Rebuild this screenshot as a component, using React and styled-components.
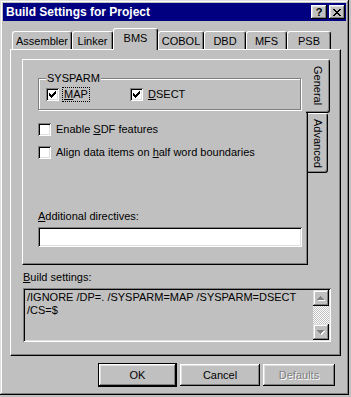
import React from 'react';
import styled, { createGlobalStyle, css } from 'styled-components';

const FACE = '#c0c0c0';
const DARK = '#808080';
const LIGHT = '#dfdfdf';

const raised = css`
  box-shadow: inset -1px -1px #000, inset 1px 1px #fff, inset -2px -2px ${DARK}, inset 2px 2px ${LIGHT};
`;
const sunken = css`
  box-shadow: inset 1px 1px ${DARK}, inset -1px -1px #fff, inset 2px 2px #000, inset -2px -2px ${LIGHT};
`;

const Global = createGlobalStyle`
  html, body { margin: 0; padding: 0; background: ${FACE}; }
  body {
    font-family: "Liberation Sans", Arial, sans-serif;
    font-size: 11px;
    color: #000;
  }
  #root { width: 351px; height: 397px; }
  u { text-underline-offset: 1px; }
`;

const Window = styled.div`
  box-sizing: border-box;
  width: 349px;
  height: 395px;
  padding: 3px;
  background: ${FACE};
  box-shadow: inset -1px -1px #000, inset 1px 1px ${LIGHT}, inset -2px -2px ${DARK}, inset 2px 2px #fff;
  display: flex;
  flex-direction: column;
`;

const TitleBar = styled.div`
  height: 18px;
  flex: none;
  background: #000080;
  color: #fff;
  display: flex;
  align-items: center;
  padding: 0 1px 0 3px;
  font-weight: bold;
  font-size: 12px;
`;

const TitleText = styled.span`
  flex: 1;
  white-space: nowrap;
`;

const CapButton = styled.div`
  box-sizing: border-box;
  width: 16px;
  height: 14px;
  background: ${FACE};
  ${raised};
  display: flex;
  align-items: center;
  justify-content: center;
  color: #000;
  font-size: 11px;
  font-weight: bold;
  line-height: 1;
  margin-left: ${p => p.$gap || 0}px;
`;

const TabStrip = styled.div`
  display: flex;
  align-items: flex-end;
  height: 21px;
  margin: 7px 0 0 9px;
  flex: none;
`;

const Tab = styled.div`
  box-sizing: border-box;
  width: ${p => p.$w}px;
  height: ${p => (p.$active ? 22 : 18)}px;
  margin-bottom: ${p => (p.$active ? -1 : 0)}px;
  padding-bottom: ${p => (p.$active ? 3 : 0)}px;
  border-top: 1px solid #fff;
  border-left: 1px solid #fff;
  border-right: 1px solid #000;
  border-radius: 3px 3px 0 0;
  box-shadow: inset -1px 0 ${DARK};
  background: ${FACE};
  display: flex;
  align-items: center;
  justify-content: center;
  position: relative;
  z-index: ${p => (p.$active ? 2 : 0)};
  white-space: nowrap;
`;

const Panel = styled.div`
  box-sizing: border-box;
  width: 331px;
  height: 307px;
  margin-left: 7px;
  flex: none;
  border: 1px solid;
  border-color: #fff #000 #000 #fff;
  box-shadow: inset -1px -1px ${DARK};
  padding: 9px 9px 0 11px;
  display: flex;
  flex-direction: column;
  position: relative;
  z-index: 1;
`;

const PageRow = styled.div`
  display: flex;
  height: 206px;
  flex: none;
`;

const InnerPage = styled.div`
  box-sizing: border-box;
  width: 286px;
  height: 206px;
  flex: none;
  border: 1px solid;
  border-color: #fff #000 #000 #fff;
  box-shadow: inset -1px -1px ${DARK};
  padding-left: 15px;
  display: flex;
  flex-direction: column;
  align-items: flex-start;
`;

const SideTabs = styled.div`
  display: flex;
  flex-direction: column;
  align-items: flex-start;
  margin-left: -2px;
`;

const SideTab = styled.div`
  box-sizing: border-box;
  width: ${p => (p.$active ? 24 : 20)}px;
  height: ${p => (p.$active ? 54 : 60)}px;
  margin-left: ${p => (p.$active ? 0 : 2)}px;
  border-top: 1px solid #fff;
  border-right: 1px solid #000;
  border-bottom: 1px solid #000;
  border-radius: 0 3px 3px 0;
  box-shadow: inset -1px -1px ${DARK};
  background: ${FACE};
  display: flex;
  align-items: center;
  justify-content: center;
  position: relative;
  z-index: ${p => (p.$active ? 2 : 0)};
`;

const VerticalText = styled.span`
  writing-mode: vertical-rl;
  white-space: nowrap;
  line-height: 13px;
`;

const GroupBox = styled.div`
  box-sizing: border-box;
  width: 263px;
  height: 32px;
  margin-top: 18px;
  border: 1px solid ${DARK};
  box-shadow: inset 1px 1px #fff, 1px 1px #fff;
  padding-left: 7px;
  display: flex;
  flex-direction: column;
  align-items: flex-start;
`;

const GroupLabel = styled.span`
  margin-top: -7px;
  padding: 0 1px;
  background: ${FACE};
  line-height: 13px;
`;

const CheckRow = styled.div`
  display: flex;
  align-items: center;
  height: 17px;
  margin-top: ${p => p.$mt || 0}px;
`;

const CheckItem = styled.div`
  display: flex;
  align-items: center;
  width: ${p => (p.$w ? `${p.$w}px` : 'auto')};
`;

const Box = styled.span`
  box-sizing: border-box;
  width: 13px;
  height: 13px;
  flex: none;
  background: #fff;
  ${sunken};
  display: flex;
  align-items: center;
  justify-content: center;
`;

const CheckLabel = styled.span`
  margin-left: 3px;
  padding: 0 1px;
  line-height: 13px;
  border: 1px dotted ${p => (p.$focus ? '#000' : 'transparent')};
  white-space: nowrap;
`;

const FieldLabel = styled.div`
  line-height: 13px;
  margin-top: ${p => p.$mt}px;
  margin-left: ${p => p.$ml || 0}px;
  white-space: nowrap;
`;

const TextInput = styled.div`
  box-sizing: border-box;
  width: 264px;
  height: 20px;
  margin-top: 4px;
  background: #fff;
  ${sunken};
`;

const ReadOnlyEdit = styled.div`
  box-sizing: border-box;
  width: 308px;
  height: 54px;
  margin: 4px 0 0 1px;
  padding: 2px;
  background: ${FACE};
  ${sunken};
  display: flex;
`;

const EditText = styled.div`
  flex: 1;
  padding: 1px 2px;
  line-height: 13px;
  white-space: pre-wrap;
  overflow: hidden;
`;

const ScrollBar = styled.div`
  width: 16px;
  flex: none;
  display: flex;
  flex-direction: column;
`;

const ScrollButton = styled.div`
  box-sizing: border-box;
  width: 16px;
  height: 16px;
  background: ${FACE};
  box-shadow: inset -1px -1px #000, inset 1px 1px ${LIGHT}, inset -2px -2px ${DARK}, inset 2px 2px #fff;
  display: flex;
  align-items: center;
  justify-content: center;
`;

const ScrollTrack = styled.div`
  flex: 1;
  background-color: #fff;
  background-image: conic-gradient(${FACE} 25%, transparent 0 50%, ${FACE} 0 75%, transparent 0);
  background-size: 2px 2px;
`;

const ButtonRow = styled.div`
  display: flex;
  justify-content: flex-end;
  align-items: center;
  gap: 3px;
  height: 24px;
  margin-top: 7px;
  padding-right: 11px;
  flex: none;
`;

const Button = styled.div`
  box-sizing: border-box;
  width: ${p => p.$w}px;
  height: 22px;
  background: ${FACE};
  ${raised};
  display: flex;
  align-items: center;
  justify-content: center;
  ${p =>
    p.$default &&
    css`
      height: 24px;
      border: 1px solid #000;
    `}
  ${p =>
    p.$disabled &&
    css`
      color: ${DARK};
      text-shadow: 1px 1px #fff;
    `}
`;

const CheckMark = () => (
  <svg width="7" height="7" viewBox="0 0 7 7" shapeRendering="crispEdges">
    <path
      fill="#000"
      d="M6 0h1v1h-1z M5 1h2v1h-2z M0 2h1v1h-1z M4 2h3v1h-3z M0 3h2v1h-2z M3 3h3v1h-3z M0 4h5v1h-5z M1 5h3v1h-3z M2 6h1v1h-1z"
    />
  </svg>
);

const CloseGlyph = () => (
  <svg width="8" height="7" viewBox="0 0 8 7" shapeRendering="crispEdges">
    <path
      fill="#000"
      d="M0 0h2v1h-2z M6 0h2v1h-2z M1 1h2v1h-2z M5 1h2v1h-2z M2 2h4v1h-4z M3 3h2v1h-2z M2 4h4v1h-4z M1 5h2v1h-2z M5 5h2v1h-2z M0 6h2v1h-2z M6 6h2v1h-2z"
    />
  </svg>
);

const Arrow = ({ down }) => {
  const d = down
    ? 'M0 0h7v1h-7z M1 1h5v1h-5z M2 2h3v1h-3z M3 3h1v1h-1z'
    : 'M3 0h1v1h-1z M2 1h3v1h-3z M1 2h5v1h-5z M0 3h7v1h-7z';
  return (
    <svg width="8" height="5" viewBox="0 0 8 5" shapeRendering="crispEdges">
      <path fill="#fff" transform="translate(1,1)" d={d} />
      <path fill={DARK} d={d} />
    </svg>
  );
};

const Check = ({ checked, focus, children, w }) => (
  <CheckItem $w={w}>
    <Box>{checked && <CheckMark />}</Box>
    <CheckLabel $focus={focus}>{children}</CheckLabel>
  </CheckItem>
);

const tabs = [
  { label: 'Assembler', w: 60 },
  { label: 'Linker', w: 41 },
  { label: 'BMS', w: 45, active: true },
  { label: 'COBOL', w: 46 },
  { label: 'DBD', w: 42 },
  { label: 'MFS', w: 41 },
  { label: 'PSB', w: 44 },
];

export default function App() {
  return (
    <>
      <Global />
      <Window>
        <TitleBar>
          <TitleText>Build Settings for Project</TitleText>
          <CapButton>?</CapButton>
          <CapButton $gap={2}>
            <CloseGlyph />
          </CapButton>
        </TitleBar>

        <TabStrip>
          {tabs.map(t => (
            <Tab key={t.label} $w={t.w} $active={t.active}>
              {t.label}
            </Tab>
          ))}
        </TabStrip>

        <Panel>
          <PageRow>
            <InnerPage>
              <GroupBox>
                <GroupLabel>SYSPARM</GroupLabel>
                <CheckRow $mt={1}>
                  <Check checked focus w={84}>
                    <u>M</u>AP
                  </Check>
                  <Check checked>
                    <u>D</u>SECT
                  </Check>
                </CheckRow>
              </GroupBox>
              <CheckRow $mt={11}>
                <Check>
                  Enable <u>S</u>DF features
                </Check>
              </CheckRow>
              <CheckRow $mt={6}>
                <Check>
                  Align data items on <u>h</u>alf word boundaries
                </Check>
              </CheckRow>
              <FieldLabel $mt={49}>
                <u>A</u>dditional directives:
              </FieldLabel>
              <TextInput />
            </InnerPage>
            <SideTabs>
              <SideTab $active>
                <VerticalText>General</VerticalText>
              </SideTab>
              <SideTab>
                <VerticalText>Advanced</VerticalText>
              </SideTab>
            </SideTabs>
          </PageRow>

          <FieldLabel $mt={6} $ml={1}>
            <u>B</u>uild settings:
          </FieldLabel>
          <ReadOnlyEdit>
            <EditText>/IGNORE /DP=. /SYSPARM=MAP /SYSPARM=DSECT /CS=$</EditText>
            <ScrollBar>
              <ScrollButton>
                <Arrow />
              </ScrollButton>
              <ScrollTrack />
              <ScrollButton>
                <Arrow down />
              </ScrollButton>
            </ScrollBar>
          </ReadOnlyEdit>
        </Panel>

        <ButtonRow>
          <Button $w={79} $default>
            OK
          </Button>
          <Button $w={80}>Cancel</Button>
          <Button $w={72} $disabled>
            Defaults
          </Button>
        </ButtonRow>
      </Window>
    </>
  );
}
